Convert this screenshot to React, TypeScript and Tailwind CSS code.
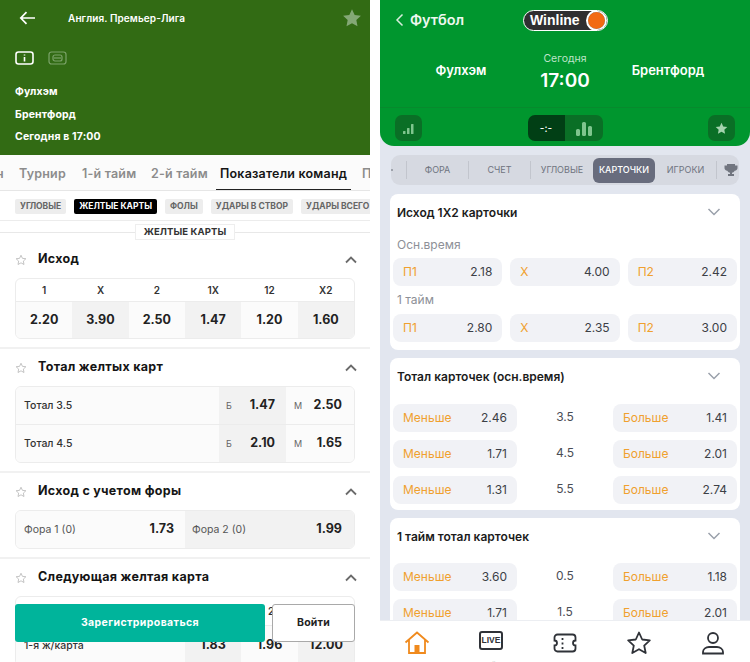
const sans = "font-['Inter','Liberation_Sans',sans-serif]";

function StarOutline() {
    return (
        <svg width="12" height="12" viewBox="0 0 24 24" fill="none" stroke="#b5b5b5" strokeWidth="1.6" className="shrink-0">
            <path d="M12 2.5l2.9 6.2 6.8.8-5 4.7 1.3 6.8-6-3.4-6 3.4 1.3-6.8-5-4.7 6.8-.8z" />
        </svg>
    );
}

function ChevronUp() {
    return (
        <svg width="12" height="8" viewBox="0 0 12 8" fill="none" stroke="#6b6b6b" strokeWidth="1.8">
            <path d="M1 6.5l5-5 5 5" />
        </svg>
    );
}

function SectionTitle({ title }: { title: string }) {
    return (
        <div className="h-[37px] flex items-center pl-[15px] pr-[13px]">
            <StarOutline />
            <span className="ml-[11px] text-[12.5px] font-bold text-[#151515] tracking-[0.3px]">{title}</span>
            <span className="ml-auto"><ChevronUp /></span>
        </div>
    );
}

function OutcomeTable() {
    const heads = ["1", "X", "2", "1X", "12", "X2"];
    const vals = ["2.20", "3.90", "2.50", "1.47", "1.20", "1.60"];
    return (
        <div className="mx-[15px] rounded-[6px] border border-[#ececec] overflow-hidden">
            <div className="grid grid-cols-6 h-[23px] items-center border-b border-[#ececec]">
                {heads.map((h) => (
                    <span key={h} className="text-center text-[10px] font-semibold text-[#333]">{h}</span>
                ))}
            </div>
            <div className="grid grid-cols-6 h-[36px]">
                {vals.map((v, i) => (
                    <span
                        key={v}
                        className={`flex items-center justify-center text-[12.5px] font-bold text-[#222] ${i % 2 === 0 ? "bg-[#fbfbfb]" : "bg-[#f2f2f2]"}`}
                    >
                        {v}
                    </span>
                ))}
            </div>
        </div>
    );
}

function TotalRow({ label, b, m, last }: { label: string; b: string; m: string; last?: boolean }) {
    return (
        <div className={`flex h-[37.5px] ${last ? "" : "border-b border-[#ececec]"}`}>
            <span className="w-[203px] pl-[8px] pt-[2px] flex items-center text-[10.5px] font-medium text-[#333] bg-[#fbfbfb]">{label}</span>
            <div className="w-[67px] flex items-center justify-between pl-[7px] pr-[11px] pt-[1px] bg-[#f2f2f2]">
                <span className="text-[9px] text-[#666]">Б</span>
                <span className="text-[12.5px] font-bold text-[#222]">{b}</span>
            </div>
            <div className="flex-1 flex items-center justify-between pl-[8px] pr-[12px] pt-[1px] bg-[#fbfbfb]">
                <span className="text-[9px] text-[#666]">М</span>
                <span className="text-[12.5px] font-bold text-[#222]">{m}</span>
            </div>
        </div>
    );
}

function LeftPanel() {
    const chips = ["УГЛОВЫЕ", "ЖЕЛТЫЕ КАРТЫ", "ФОЛЫ", "УДАРЫ В СТВОР", "УДАРЫ ВСЕГО"];
    return (
        <div className="relative w-[370px] h-[662px] overflow-hidden bg-white shrink-0">
            <div className="h-[155px] bg-[#326b14] pl-[15px] pr-[8px] text-white">
                <div className="h-[36px] flex items-center">
                    <svg width="17" height="14" viewBox="0 0 17 14" fill="none" stroke="#fff" strokeWidth="1.7" className="ml-[4px]">
                        <path d="M16 7H2M7.5 1.2L1.8 7l5.700 5.800" />
                    </svg>
                    <span className="ml-[32px] text-[10px] font-semibold tracking-[0.1px]">Англия. Премьер-Лига</span>
                    <svg width="20" height="20" viewBox="0 0 24 24" fill="#84a876" className="ml-auto">
                        <path d="M12 1.500l3.200 6.900 7.500.9-5.500 5.200 1.400 7.400-6.600-3.700-6.600 3.700 1.400-7.400L1.300 9.300l7.500-.9z" />
                    </svg>
                </div>
                <div className="mt-[15px] flex items-center gap-[14px]">
                    <svg width="19" height="14" viewBox="0 0 19 14" fill="none" stroke="#fff" strokeWidth="1.6">
                        <rect x="1" y="1" width="17" height="12" rx="2.500" />
                        <path d="M9.500 6v4.500M9.500 3.500v1" />
                    </svg>
                    <svg width="19" height="14" viewBox="0 0 19 14" fill="none" stroke="#7ba369" strokeWidth="1.200">
                        <rect x="1" y="1" width="17" height="12" rx="2.500" />
                        <rect x="5" y="4" width="9" height="6" rx="2" />
                        <path d="M6 7h7" />
                    </svg>
                </div>
                <div className="mt-[16px] text-[10.500px] font-bold leading-[22.500px] tracking-[0.15px]">
                    <div>Фулхэм</div>
                    <div>Брентфорд</div>
                    <div>Сегодня в 17:00</div>
                </div>
            </div>

            <div className="h-[36px] pt-[4px] flex items-center border-b border-[#e6e6e6] text-[12.500px] font-semibold text-[#8c8c8c] whitespace-nowrap bg-[#fbfbfb] tracking-[0.2px]">
                <span className="w-[19px] shrink-0 -ml-[4px] mr-[4px]">н</span>
                <span className="w-[63px] shrink-0">Турнир</span>
                <span className="w-[69px] shrink-0">1-й тайм</span>
                <span className="w-[69px] shrink-0">2-й тайм</span>
                <span className="relative h-full flex items-center w-[142px] shrink-0 text-[#151515]">
                    Показатели команд
                    <span className="absolute -left-[4px] right-[11px] bottom-0 h-[1.500px] bg-[#222]"></span>
                </span>
                <span>П</span>
            </div>

            <div className="h-[30px] pt-[1px] flex items-center gap-[8px] pl-[15px] whitespace-nowrap border-b border-[#ececec]">
                {chips.map((c) => (
                    <span
                        key={c}
                        className={`h-[15px] px-[5px] flex items-center rounded-[2px] text-[8.500px] font-bold ${c === "ЖЕЛТЫЕ КАРТЫ" ? "bg-black text-white" : "bg-[#ededed] text-[#666]"}`}
                    >
                        {c}
                    </span>
                ))}
            </div>

            <div className="relative h-[20px]">
                <div className="absolute left-0 right-0 top-[8px] h-px bg-[#e8e8e8]"></div>
                <div className="relative mx-auto mt-[3px] w-[100px] h-[16px] flex items-center justify-center bg-white border border-[#eeeeee] text-[9.500px] font-bold text-[#333] tracking-[0.1px]">
                    ЖЕЛТЫЕ КАРТЫ
                </div>
            </div>

            <div className="-mt-[3px]">
                <SectionTitle title="Исход" />
                <OutcomeTable />
                <div className="mt-[8px] h-[2px] bg-[#f1f1f1]"></div>

                <SectionTitle title="Тотал желтых карт" />
                <div className="mx-[15px] rounded-[6px] border border-[#ececec] overflow-hidden">
                    <TotalRow label="Тотал 3.5" b="1.47" m="2.50" />
                    <TotalRow label="Тотал 4.5" b="2.10" m="1.65" last />
                </div>
                <div className="mt-[8px] h-[2px] bg-[#f1f1f1]"></div>

                <SectionTitle title="Исход с учетом форы" />
                <div className="mx-[15px] rounded-[6px] border border-[#ececec] overflow-hidden flex h-[39px] text-[10.500px] text-[#555]">
                    <div className="w-[169px] flex items-center justify-between pl-[8px] pr-[11px] bg-[#fbfbfb]">
                        <span>Фора 1 (0)</span>
                        <span className="text-[12.500px] font-bold text-[#222]">1.73</span>
                    </div>
                    <div className="flex-1 flex items-center justify-between pl-[7px] pr-[12px] bg-[#f2f2f2]">
                        <span>Фора 2 (0)</span>
                        <span className="text-[12.500px] font-bold text-[#222]">1.99</span>
                    </div>
                </div>
                <div className="mt-[8px] h-[2px] bg-[#f1f1f1]"></div>

                <SectionTitle title="Следующая желтая карта" />
                <div className="mx-[15px] rounded-[6px] border border-[#ececec] overflow-hidden">
                    <div className="h-[29px] border-b border-[#ececec] flex items-center">
                        <span className="ml-[252px] text-[10px] font-semibold text-[#333]">2</span>
                    </div>
                    <div className="flex h-[39px] text-[12.500px] font-bold text-[#222]">
                        <span className="w-[169px] pl-[8px] flex items-center text-[10.500px] font-medium text-[#333] bg-[#fbfbfb]">1-я ж/карта</span>
                        <span className="w-[56px] flex items-center justify-center bg-[#f2f2f2]">1.83</span>
                        <span className="w-[57px] flex items-center justify-center bg-[#fbfbfb]">1.96</span>
                        <span className="flex-1 flex items-center justify-center bg-[#f2f2f2]">12.00</span>
                    </div>
                </div>
            </div>

            <div className="absolute left-[15px] top-[604px] w-[340px] h-[38px] flex gap-[7px]">
                <button className="w-[250px] rounded-[3px] bg-[#00b49b] text-white text-[10.500px] font-bold tracking-[0.4px]">Зарегистрироваться</button>
                <button className="flex-1 rounded-[3px] bg-white border border-[#a9a9a9] text-[#222] text-[10.500px] font-bold tracking-[0.2px]">Войти</button>
            </div>
        </div>
    );
}

function Chevron() {
    return (
        <svg width="14" height="8" viewBox="0 0 14 8" fill="none" stroke="#9aa0ab" strokeWidth="1.500">
            <path d="M1.500 1l5.500 5.500L12.500 1" />
        </svg>
    );
}

function CardTitle({ title }: { title: string }) {
    return (
        <div className="h-[37px] flex items-center pl-[4px] pr-[16px]">
            <span className="text-[12px] font-semibold text-[#1c1c1c]">{title}</span>
            <span className="ml-auto -mt-[2px]"><Chevron /></span>
        </div>
    );
}

function Odd({ label, value, className }: { label: string; value: string; className: string }) {
    return (
        <div className={`h-[28px] rounded-[8px] bg-[#f1f2f6] flex items-center justify-between pl-[10px] pr-[10px] ${className}`}>
            <span className="text-[12px] text-[#f0a02e]">{label}</span>
            <span className="text-[12px] text-[#3c3f46]">{value}</span>
        </div>
    );
}

function TotalLine({ under, mid, over }: { under: string; mid: string; over: string }) {
    return (
        <div className="flex items-center">
            <Odd label="Меньше" value={under} className="w-[124px]" />
            <span className="flex-1 text-center text-[12px] text-[#4a4d55] -mt-[3px]">{mid}</span>
            <Odd label="Больше" value={over} className="w-[124px]" />
        </div>
    );
}

function RightPanel() {
    const tabs = ["ФОРА", "СЧЕТ", "УГЛОВЫЕ", "КАРТОЧКИ", "ИГРОКИ"];
    return (
        <div className="relative w-[370px] h-[662px] overflow-hidden bg-[#e2e6ef] flex flex-col shrink-0">
            <div className="h-[146px] shrink-0 rounded-b-[14px] bg-[#00962e] text-white flex flex-col">
                <div className="h-[108px] border-b border-[#078a2d] relative">
                    <div className="flex items-center h-[40px] pl-[15px]">
                        <svg width="9" height="14" viewBox="0 0 9 14" fill="none" stroke="#d8eedd" strokeWidth="1.500">
                            <path d="M7.500 1.500L2 7l5.500 5.500" />
                        </svg>
                        <span className="ml-[6px] w-[55px] text-[14.500px] font-semibold text-[#eef8f0]">Футбол</span>
                        <div className="ml-[58px] w-[85px] h-[21px] rounded-full bg-[#2f2f31] border border-white flex items-center pl-[6px] relative overflow-hidden">
                            <span className="text-[14px] font-bold leading-none text-white font-['Liberation_Sans',sans-serif]">Winline</span>
                            <span className="absolute right-[2px] top-[1px] w-[17px] h-[17px] rounded-full bg-[#f26a13] outline-2 outline-white"></span>
                        </div>
                    </div>
                    <div className="flex items-start mt-[11px]">
                        <span className="w-[162px] text-center mt-[10px] text-[13px] font-semibold">Фулхэм</span>
                        <div className="w-[46px] flex flex-col items-center whitespace-nowrap">
                            <span className="text-[10.500px] text-[#bfe4c9]">Сегодня</span>
                            <span className="mt-[2px] text-[19px] font-semibold leading-[24px]">17:00</span>
                        </div>
                        <span className="flex-1 text-center mt-[10px] text-[13px] font-semibold pr-[2px]">Брентфорд</span>
                    </div>
                </div>
                <div className="flex-1 flex items-start justify-between pt-[7px] px-[15px]">
                    <div className="w-[27px] h-[26px] rounded-[7px] bg-[#0a6f26] flex items-center justify-center">
                        <svg width="13" height="13" viewBox="0 0 13 13" fill="#7fc58e">
                            <rect x="1" y="9" width="2.500" height="3" rx="0.500" />
                            <rect x="5" y="6" width="2.500" height="6" rx="0.500" />
                            <rect x="9" y="2" width="2.500" height="10" rx="0.500" />
                        </svg>
                    </div>
                    <div className="flex h-[26px] rounded-[7px] overflow-hidden">
                        <span className="w-[37px] bg-[#013f15] flex items-center justify-center text-[10px] font-medium">-:-</span>
                        <span className="w-[38px] bg-[#0a6f26] flex items-center justify-center">
                            <svg width="18" height="15" viewBox="0 0 18 15" fill="#7fc58e">
                                <rect x="1" y="8" width="4" height="7" rx="1.500" />
                                <rect x="7" y="1" width="4" height="14" rx="1.500" />
                                <rect x="13" y="5" width="4" height="10" rx="1.500" />
                            </svg>
                        </span>
                    </div>
                    <div className="w-[27px] h-[26px] rounded-[7px] bg-[#0a6f26] flex items-center justify-center">
                        <svg width="13" height="13" viewBox="0 0 24 24" fill="#a4d3ae">
                            <path d="M12 1.500l3.200 6.900 7.500.9-5.500 5.200 1.400 7.400-6.600-3.700-6.600 3.700 1.400-7.400L1.300 9.300l7.500-.9z" />
                        </svg>
                    </div>
                </div>
            </div>

            <div className="mt-[9px] mx-[11px] h-[30px] shrink-0 rounded-[9px] bg-[#d6d9e1] flex items-center overflow-hidden">
                <span className="w-[16px] shrink-0 h-[18px] border-r border-[#c2c5cd] flex items-center">
                    <span className="w-[2px] h-[2px] rounded-full bg-[#8b8f99]"></span>
                </span>
                {tabs.map((t) => (
                    <span
                        key={t}
                        className={`w-[62px] shrink-0 flex items-center justify-center text-[9px] ${t === "КАРТОЧКИ" ? "h-[25px] rounded-[6px] bg-[#686c7d] text-white font-medium" : t === "ИГРОКИ" ? "h-[18px] text-[#6f7480] border-r border-[#c2c5cd]" : t === "УГЛОВЫЕ" ? "h-[18px] text-[#6f7480]" : "h-[18px] text-[#6f7480] border-r border-[#c2c5cd]"}`}
                    >
                        {t}
                    </span>
                ))}
                <svg width="14" height="14" viewBox="0 0 14 14" fill="#71757f" className="ml-[7px] shrink-0">
                    <path d="M3 1h8v1.500h2.500V5c0 1.500-1 2.500-2.800 2.700C10 9 9 9.500 8 9.700V11h2v2H4v-2h2V9.700C5 9.500 4 9 3.300 7.700 1.500 7.500.5 6.500.5 5V2.500H3z" />
                </svg>
            </div>

            <div className="flex-1 min-h-0 overflow-hidden mt-[9px] mx-[10px] flex flex-col gap-[8px]">
                <div className="h-[156px] shrink-0 rounded-[8px] bg-white px-[3px]">
                    <CardTitle title="Исход 1Х2 карточки" />
                    <div className="pl-[4px] h-[27px] flex items-center text-[12px] text-[#8d9097]">Осн.время</div>
                    <div className="grid grid-cols-3 gap-[8px]">
                        <Odd label="П1" value="2.18" className="" />
                        <Odd label="Х" value="4.00" className="" />
                        <Odd label="П2" value="2.42" className="" />
                    </div>
                    <div className="pl-[4px] h-[28px] flex items-center text-[12px] text-[#8d9097]">1 тайм</div>
                    <div className="grid grid-cols-3 gap-[8px]">
                        <Odd label="П1" value="2.80" className="" />
                        <Odd label="Х" value="2.35" className="" />
                        <Odd label="П2" value="3.00" className="" />
                    </div>
                </div>

                <div className="h-[152px] shrink-0 rounded-[8px] bg-white px-[3px]">
                    <CardTitle title="Тотал карточек (осн.время)" />
                    <div className="mt-[9px] flex flex-col gap-[8px]">
                        <TotalLine under="2.46" mid="3.5" over="1.41" />
                        <TotalLine under="1.71" mid="4.5" over="2.01" />
                        <TotalLine under="1.31" mid="5.5" over="2.74" />
                    </div>
                </div>

                <div className="shrink-0 rounded-[8px] bg-white px-[3px] h-[152px]">
                    <CardTitle title="1 тайм тотал карточек" />
                    <div className="mt-[8px] flex flex-col gap-[8px]">
                        <TotalLine under="3.60" mid="0.5" over="1.18" />
                        <TotalLine under="1.71" mid="1.5" over="2.01" />
                    </div>
                </div>
            </div>

            <div className="h-[42px] shrink-0 bg-white border-t border-[#eceef2] grid grid-cols-5 pt-[10px]">
                <div className="flex flex-col items-center">
                    <svg width="26" height="23" viewBox="0 0 26 23" fill="none" stroke="#f08a1d" strokeWidth="1.800" className="-ml-[1px]">
                        <path d="M1.500 11.500L13 1.500l11.500 10M5 9v13h16V9" />
                        <rect x="10.500" y="14" width="5" height="8" fill="#f08a1d" stroke="none" />
                    </svg>
                    <span className="mt-[5px] text-[8px] leading-[12px] text-[#f08a1d]">Главная</span>
                </div>
                <div className="flex flex-col items-center">
                    <div className="w-[24px] h-[19px] rounded-[3px] border-2 border-[#2f3238] flex items-center justify-center text-[8.5px] font-bold text-[#2f3238] leading-none mb-[9px] font-['Liberation_Sans',sans-serif]">LIVE</div>
                    <span className="text-[8px] leading-[12px] text-[#888]">Лайв</span>
                </div>
                <div className="flex flex-col items-center">
                    <svg width="24" height="24" viewBox="0 0 24 24" fill="none" stroke="#2f3238" strokeWidth="1.800">
                        <path d="M4.500 3.500h15a3 3 0 0 1 3 3v3a2.500 2.500 0 0 0 0 5v3a3 3 0 0 1-3 3h-15a3 3 0 0 1-3-3v-3a2.500 2.500 0 0 0 0-5v-3a3 3 0 0 1 3-3z" />
                        <path d="M9.500 7v2M9.500 11.500v2M9.500 16v2" />
                    </svg>
                    <span className="mt-[4px] text-[8px] leading-[12px] text-[#888]">Купоны</span>
                </div>
                <div className="flex flex-col items-center">
                    <svg width="24" height="24" viewBox="0 0 24 24" fill="none" stroke="#2f3238" strokeWidth="1.800" strokeLinejoin="round">
                        <path d="M12 1.500l3.200 7 7.600.9-5.600 5.200 1.500 7.400-6.700-3.800-6.700 3.800 1.500-7.400L1.200 9.400l7.600-.9z" />
                    </svg>
                    <span className="mt-[4px] text-[8px] leading-[12px] text-[#888]">Избранное</span>
                </div>
                <div className="flex flex-col items-center">
                    <svg width="24" height="24" viewBox="0 0 24 24" fill="none" stroke="#2f3238" strokeWidth="1.800">
                        <circle cx="12" cy="7" r="5" />
                        <path d="M2 22.500v-1.500c0-3 3-5 6-5h8c3 0 6 2 6 5v1.500z" />
                    </svg>
                    <span className="mt-[4px] text-[8px] leading-[12px] text-[#888]">Профиль</span>
                </div>
            </div>
        </div>
    );
}

export default function App() {
    return (
        <div className={`w-[750px] h-[662px] overflow-hidden flex gap-[10px] bg-white ${sans}`}>
            <LeftPanel />
            <RightPanel />
        </div>
    );
}
